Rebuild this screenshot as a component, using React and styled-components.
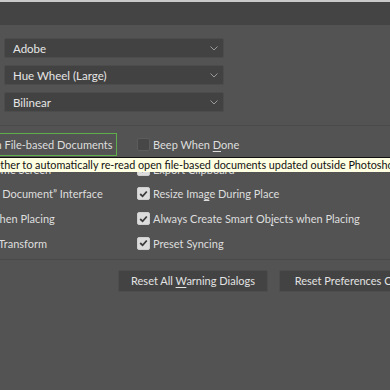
import React from "react";
import styled, { createGlobalStyle } from "styled-components";

const GlobalStyle = createGlobalStyle`
  html, body {
    margin: 0;
    padding: 0;
    background: #535353;
  }
  body {
    font-family: Lato, "Liberation Sans", sans-serif;
    font-size: 11px;
    color: #dedede;
  }
`;

const Page = styled.div`
  position: relative;
  width: 390px;
  height: 390px;
  overflow: hidden;
  background: #535353;
`;

const TopBar = styled.div`
  height: 23px;
  border-top: 2px solid #c9c9c9;
  background: #444444;
`;

const SelectGroup = styled.div`
  display: flex;
  flex-direction: column;
  gap: 7px;
  padding: 13px 0 13px 4px;
  border-bottom: 1px solid #4a4a4a;
`;

const Select = styled.div`
  display: flex;
  align-items: center;
  justify-content: space-between;
  box-sizing: border-box;
  width: 220px;
  height: 20px;
  padding: 0 5px 0 8px;
  background: #424242;
  border: 1px solid #4c4c4c;
  border-radius: 2px;
  color: #e6e6e6;
  font-size: 11.5px;
`;

const Chevron = () => (
  <svg width="8" height="5" viewBox="0 0 8 5">
    <path d="M0.5 0.5 L4 4 L7.5 0.5" fill="none" stroke="#9a9a9a" strokeWidth="1" />
  </svg>
);

const Options = styled.div`
  position: relative;
  display: grid;
  grid-template-columns: 137px 1fr;
  grid-auto-rows: 24.6px;
  padding: 6.5px 0 3.5px;
  border-bottom: 1px solid #4a4a4a;
`;

const Cell = styled.div`
  display: flex;
  align-items: center;
  white-space: nowrap;
  min-width: 0;
`;

const LeftLabel = styled.span`
  flex: none;
  margin-left: ${(p) => p.$shift}px;
  padding: 4px 3px 4px 2px;
  border: 1px solid ${(p) => (p.$focused ? "#5fae4c" : "transparent")};
`;

const Text = styled.span`
  white-space: pre;
`;

const Box = styled.span`
  flex: none;
  display: inline-flex;
  align-items: center;
  justify-content: center;
  box-sizing: border-box;
  width: 13px;
  height: 13px;
  margin-right: 3px;
  border-radius: 2px;
  background: ${(p) => (p.$checked ? "#dcdcdc" : "#474747")};
  border: 1px solid ${(p) => (p.$checked ? "#cfcfcf" : "#5c5c5c")};
`;

const Tick = () => (
  <svg width="9" height="8" viewBox="0 0 9 8">
    <path d="M1.2 4 L3.6 6.3 L7.8 1.5" fill="none" stroke="#3a3a3a" strokeWidth="1.8" />
  </svg>
);

const U = styled.span`
  text-decoration: underline;
  text-underline-offset: 2px;
`;

const Tooltip = styled.div`
  position: absolute;
  left: -52px;
  top: 31px;
  height: 14px;
  line-height: 13px;
  white-space: nowrap;
  background: #ffffe1;
  border-top: 1px solid #111;
  color: #111;
  font-size: 10.8px;
  z-index: 2;
  width: 470px;
`;

const ButtonRow = styled.div`
  display: flex;
  gap: 11px;
  padding: 10px 0 0 118px;
  white-space: nowrap;
`;

const Button = styled.div`
  flex: none;
  box-sizing: border-box;
  width: ${(p) => p.$width}px;
  height: 22px;
  padding: 0 12px;
  display: flex;
  align-items: center;
  justify-content: center;
  background: #434343;
  border: 1px solid #4d4d4d;
  border-radius: 2px;
  color: #e2e2e2;
`;

const Check = ({ checked, children }) => (
  <Cell>
    <Box $checked={checked}>{checked && <Tick />}</Box>
    <Text>{children}</Text>
  </Cell>
);

export default function App() {
  return (
    <Page>
      <GlobalStyle />
      <TopBar />
      <SelectGroup>
        <Select>Adobe<Chevron /></Select>
        <Select>Hue Wheel (Large)<Chevron /></Select>
        <Select>Bilinear<Chevron /></Select>
      </SelectGroup>
      <Options>
        <Cell>
          <LeftLabel $shift={-94} $focused>Auto-Update Open File-based Documents</LeftLabel>
        </Cell>
        <Check>Beep When <U>D</U>one</Check>
        <Cell>
          <LeftLabel $shift={-90}>Auto show the Home Screen</LeftLabel>
        </Cell>
        <Check checked>Export Clipboard</Check>
        <Cell>
          <LeftLabel $shift={-87}>Use Legacy “New Document” Interface</LeftLabel>
        </Cell>
        <Check checked>Resize Ima<U>g</U>e During Place</Check>
        <Cell>
          <LeftLabel $shift={-86}>Skip Transform when Placing</LeftLabel>
        </Cell>
        <Check checked>Always Create Smart Ob<U>j</U>ects when Placing</Check>
        <Cell>
          <LeftLabel $shift={-85}>Use Legacy Free Transform</LeftLabel>
        </Cell>
        <Check checked>Preset Syncing</Check>
        <Tooltip>
          Check whether to automatically re-read open file-based documents updated outside Photoshop
        </Tooltip>
      </Options>
      <ButtonRow>
        <Button $width={150}>
          <Text>Reset All <U>W</U>arning Dialogs</Text>
        </Button>
        <Button $width={160}>
          <Text>Reset Preferences On Quit</Text>
        </Button>
      </ButtonRow>
    </Page>
  );
}
